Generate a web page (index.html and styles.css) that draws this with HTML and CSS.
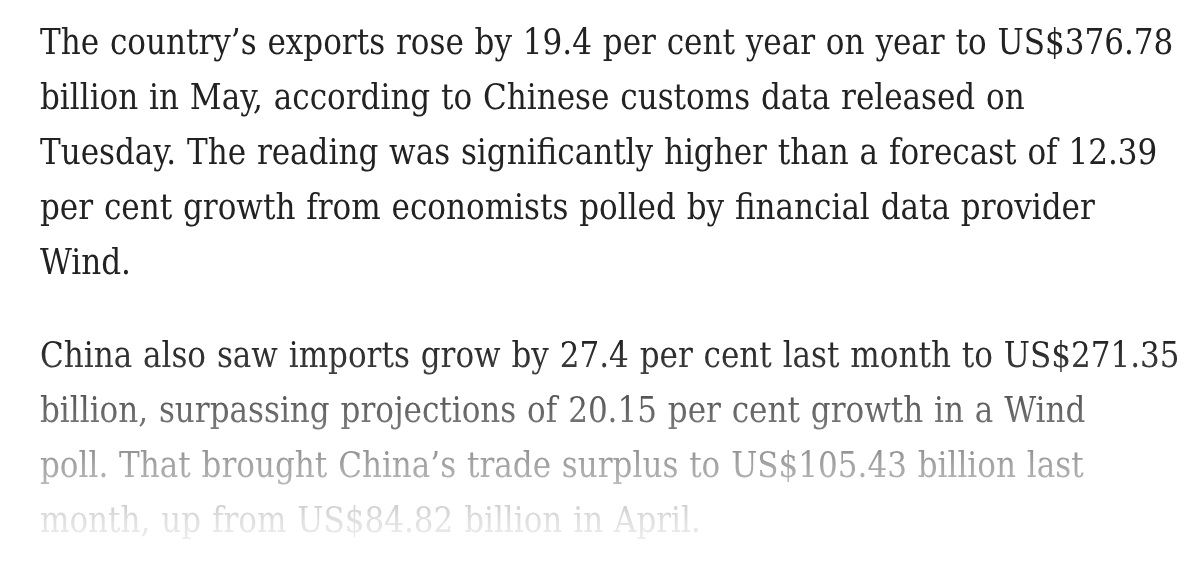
FILE: index.html
```html
<!DOCTYPE html>
<html lang="en">
<head>
<meta charset="utf-8">
<title>China exports</title>
<link rel="stylesheet" href="styles.css">
</head>
<body>
<article class="story">
  <p class="story-para">The country’s exports rose by 19.4 per cent year on year to US$376.78<br>
  billion in May, according to Chinese customs data released on<br>
  Tuesday. The reading was significantly higher than a forecast of 12.39<br>
  per cent growth from economists polled by financial data provider<br>
  Wind.</p>
  <p class="story-para">China also saw imports grow by 27.4 per cent last month to US$271.35<br>
  billion, surpassing projections of 20.15 per cent growth in a Wind<br>
  poll. That brought China’s trade surplus to US$105.43 billion last<br>
  month, up from US$84.82 billion in April.</p>
</article>
</body>
</html>
```
FILE: styles.css
```css
html, body {
  margin: 0;
  padding: 0;
  background: #fff;
}
body {
  width: 1200px;
  height: 568px;
  overflow: hidden;
}
.story {
  padding: 15px 10px 0 40px;
  font-family: "DejaVu Serif Condensed", "DejaVu Serif", serif;
  font-stretch: condensed;
  font-size: 34.5px;
  line-height: 55px;
  word-spacing: 1px;
  color: #222;
  -webkit-mask-image: linear-gradient(to bottom,
    rgba(0,0,0,1) 340px,
    rgba(0,0,0,0.77) 395px,
    rgba(0,0,0,0.41) 465px,
    rgba(0,0,0,0.14) 520px,
    rgba(0,0,0,0.03) 555px,
    rgba(0,0,0,0) 568px);
  mask-image: linear-gradient(to bottom,
    rgba(0,0,0,1) 340px,
    rgba(0,0,0,0.77) 395px,
    rgba(0,0,0,0.41) 465px,
    rgba(0,0,0,0.14) 520px,
    rgba(0,0,0,0.03) 555px,
    rgba(0,0,0,0) 568px);
  height: 553px;
}
.story-para {
  margin: 0 0 38px;
}
```
